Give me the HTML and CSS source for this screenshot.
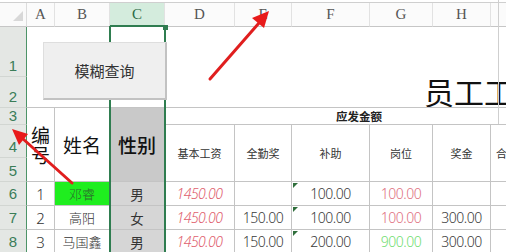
FILE: index.html
```html
<!DOCTYPE html>
<html lang="zh-CN">
<head>
<meta charset="utf-8">
<title>员工工资表</title>
<link rel="stylesheet" href="styles.css">
</head>
<body>
<div class="page">
  <div class="sheet">
    <div class="corner"><span class="tri"></span></div>
    <div class="ch">A</div>
    <div class="ch">B</div>
    <div class="ch ch-sel">C</div>
    <div class="ch">D</div>
    <div class="ch">E</div>
    <div class="ch">F</div>
    <div class="ch">G</div>
    <div class="ch">H</div>
    <div class="ch ch-last"></div>

    <div class="rh r1">1</div>
    <div class="rh r2">2</div>
    <div class="rh r3">3</div>
    <div class="rh r4">4</div>
    <div class="rh r5">5</div>
    <div class="rh r6">6</div>
    <div class="rh r7">7</div>
    <div class="rh r8">8</div>

    <div class="title"><span>员工工资表</span></div>

    <div class="hd hd-no">编号</div>
    <div class="hd hd-name">姓名</div>
    <div class="hd hd-sex">性别</div>
    <div class="group">应发金额</div>
    <div class="lbl c-d">基本工资</div>
    <div class="lbl c-e">全勤奖</div>
    <div class="lbl c-f">补助</div>
    <div class="lbl c-g">岗位</div>
    <div class="lbl c-h">奖金</div>
    <div class="lbl c-i lbl-cut">合计</div>

    <div class="cell row6 num">1</div>
    <div class="cell row6 name name-hi">邓睿</div>
    <div class="cell row6 sex">男</div>
    <div class="cell row6 val base">1450.00</div>
    <div class="cell row6 val"></div>
    <div class="cell row6 val flag">100.00</div>
    <div class="cell row6 val pos-red">100.00</div>
    <div class="cell row6 val"></div>
    <div class="cell row6 val last"></div>

    <div class="cell row7 num">2</div>
    <div class="cell row7 name">高阳</div>
    <div class="cell row7 sex">女</div>
    <div class="cell row7 val base">1450.00</div>
    <div class="cell row7 val">150.00</div>
    <div class="cell row7 val flag">100.00</div>
    <div class="cell row7 val pos-red">100.00</div>
    <div class="cell row7 val">300.00</div>
    <div class="cell row7 val last"></div>

    <div class="cell row8 num">3</div>
    <div class="cell row8 name">马国鑫</div>
    <div class="cell row8 sex">男</div>
    <div class="cell row8 val base">1450.00</div>
    <div class="cell row8 val">150.00</div>
    <div class="cell row8 val flag">200.00</div>
    <div class="cell row8 val pos-green">900.00</div>
    <div class="cell row8 val">300.00</div>
    <div class="cell row8 val last"></div>
  </div>

  <div class="col-select"><span class="handle"></span></div>
  <div class="pane-edge"></div>
  <button class="query-btn" type="button">模糊查询</button>

  <svg class="arrows" width="506" height="252" viewBox="0 0 506 252" aria-hidden="true">
    <line x1="210" y1="79" x2="259" y2="23" class="shaft"/>
    <polygon points="269,11 264,28 252,18" class="head"/>
    <line x1="72" y1="183" x2="22" y2="138" class="shaft"/>
    <polygon points="12,129 28,134 19,145" class="head"/>
  </svg>
</div>
</body>
</html>
```

FILE: styles.css
```css
html, body {
  margin: 0;
  padding: 0;
  background: #ffffff;
}

.page {
  position: relative;
  width: 506px;
  height: 252px;
  overflow: hidden;
  padding-top: 2px;
  box-sizing: border-box;
  font-family: "Noto Sans CJK SC", "Noto Sans", sans-serif;
  color: #333;
}

.sheet {
  display: grid;
  grid-template-columns: 27px 28px 55px 55px 70px 57px 78px 63px 58px 40px;
  grid-template-rows: 24px 50px 31px 17px 33px 24px 24px 24px 24px;
  border-top: 1px solid #cfcfcf;
}

/* column headers */
.corner {
  grid-row: 1;
  grid-column: 1;
  position: relative;
  background: #fafafa;
  border-right: 1px solid #dcdcdc;
  border-bottom: 1px solid #c6c6c6;
}
.tri {
  position: absolute;
  right: 3px;
  top: 8px;
  width: 0;
  height: 0;
  border-left: 10px solid transparent;
  border-bottom: 10px solid #d8d8d8;
}
.ch {
  grid-row: 1;
  display: flex;
  align-items: center;
  justify-content: center;
  background: #fbfbfb;
  border-right: 1px solid #e2e2e2;
  border-bottom: 1px solid #c6c6c6;
  font-family: "Liberation Serif", "DejaVu Serif", serif;
  font-size: 15px;
  color: #555;
  box-sizing: border-box;
}
.ch-sel {
  background: #d4ecdd;
  color: #2a6a44;
  border-bottom: 2px solid #2f7d50;
}
.ch-last { border-right: none; }

/* row headers */
.rh {
  grid-column: 1;
  display: flex;
  align-items: flex-end;
  justify-content: center;
  padding-bottom: 1px;
  background: #e4e7e4;
  border-right: 1px solid #4d9468;
  border-bottom: 1px solid #d2d6d2;
  font-family: "Liberation Sans", Arial, sans-serif;
  font-size: 15px;
  line-height: 18px;
  color: #3a7d58;
  box-sizing: border-box;
}
.r1 { grid-row: 2; }
.r2 { grid-row: 3; }
.r3 { grid-row: 4; align-items: center; padding-bottom: 0; }
.r4 { grid-row: 5; }
.r5 { grid-row: 6; }
.r6 { grid-row: 7; align-items: center; padding-bottom: 0; }
.r7 { grid-row: 8; align-items: center; padding-bottom: 0; }
.r8 { grid-row: 9; align-items: center; padding-bottom: 0; }

/* title cell */
.title {
  grid-column: 2 / 11;
  grid-row: 2 / 4;
  display: flex;
  align-items: flex-end;
  padding-left: 397px;
  border-bottom: 1px solid #c4c4c4;
  overflow: hidden;
  white-space: nowrap;
  box-sizing: border-box;
}
.title span {
  font-size: 30px;
  line-height: 32px;
  color: #111;
  font-weight: 400;
}

/* table header */
.hd {
  grid-row: 4 / 7;
  display: flex;
  align-items: center;
  justify-content: center;
  text-align: center;
  font-size: 19px;
  color: #111;
  border-right: 1px solid #c4c4c4;
  border-bottom: 1px solid #c4c4c4;
  box-sizing: border-box;
}
.hd-no {
  grid-column: 2;
  line-height: 20px;
  padding: 0 4px;
  word-break: break-all;
}
.hd-name { grid-column: 3; }
.hd-sex {
  grid-column: 4;
  background: #c9c9c9;
  font-weight: 500;
}

.group {
  grid-column: 5 / 11;
  grid-row: 4;
  display: flex;
  align-items: center;
  padding-left: 171px;
  font-size: 11.5px;
  font-weight: 700;
  color: #222;
  border-bottom: 1px solid #c4c4c4;
  box-sizing: border-box;
}

.lbl {
  grid-row: 5 / 7;
  display: flex;
  align-items: center;
  justify-content: center;
  font-size: 11px;
  color: #333;
  border-right: 1px solid #c4c4c4;
  border-bottom: 1px solid #c4c4c4;
  box-sizing: border-box;
  white-space: nowrap;
  overflow: hidden;
}
.c-d { grid-column: 5; }
.c-e { grid-column: 6; }
.c-f { grid-column: 7; }
.c-g { grid-column: 8; }
.c-h { grid-column: 9; }
.c-i { grid-column: 10; }
.lbl-cut {
  justify-content: flex-start;
  padding-left: 5px;
  border-right: none;
}

/* data cells */
.cell {
  display: flex;
  align-items: center;
  justify-content: center;
  border-right: 1px solid #c4c4c4;
  border-bottom: 1px solid #c4c4c4;
  box-sizing: border-box;
  white-space: nowrap;
  position: relative;
}
.row6 { grid-row: 7; }
.row7 { grid-row: 8; }
.row8 { grid-row: 9; }
.num {
  font-family: "Noto Sans", sans-serif;
  font-size: 15px;
  font-weight: 300;
  color: #333;
}
.name {
  font-size: 13px;
  font-weight: 300;
  color: #333;
}
.name-hi {
  background: #1fee1f;
  color: #2c6a2c;
}
.sex {
  font-size: 13.5px;
  background: #d6d6d6;
  color: #333;
}
.val {
  font-family: "Noto Sans", sans-serif;
  font-size: 14px;
  font-weight: 300;
  letter-spacing: -0.5px;
  color: #3a3a3a;
}
.base {
  font-style: italic;
  color: #e0606e;
}
.pos-red { color: #e0707e; }
.pos-green { color: #6fdd6f; }
.last { border-right: none; }

.flag::before {
  content: "";
  position: absolute;
  left: 1px;
  top: 1px;
  width: 0;
  height: 0;
  border-top: 5px solid #2f6e3b;
  border-right: 5px solid transparent;
}

/* overlays */
.col-select {
  position: absolute;
  left: 109px;
  top: 26px;
  width: 57px;
  height: 230px;
  border-left: 2px solid #2f7d50;
  border-right: 2px solid #2f7d50;
  box-sizing: border-box;
  pointer-events: none;
}
.handle {
  position: absolute;
  right: -4px;
  top: -1px;
  width: 5px;
  height: 5px;
  background: #2f7d50;
}

.pane-edge {
  position: absolute;
  left: 498px;
  top: 0;
  width: 1px;
  height: 124px;
  background: #cfcfcf;
}

.query-btn {
  position: absolute;
  left: 43px;
  top: 42px;
  width: 124px;
  height: 58px;
  margin: 0;
  padding: 0;
  background: #efefef;
  border: 1px solid #dedede;
  border-right: 2px solid #c2c2c2;
  border-bottom: 2px solid #c2c2c2;
  border-radius: 0;
  font-family: "Noto Sans CJK SC", sans-serif;
  font-size: 15px;
  color: #333;
  box-sizing: border-box;
}

.arrows {
  position: absolute;
  left: 0;
  top: 0;
  pointer-events: none;
}
.shaft {
  stroke: #e01e1e;
  stroke-width: 3;
  stroke-linecap: round;
}
.head {
  fill: #e81a1a;
}
```
